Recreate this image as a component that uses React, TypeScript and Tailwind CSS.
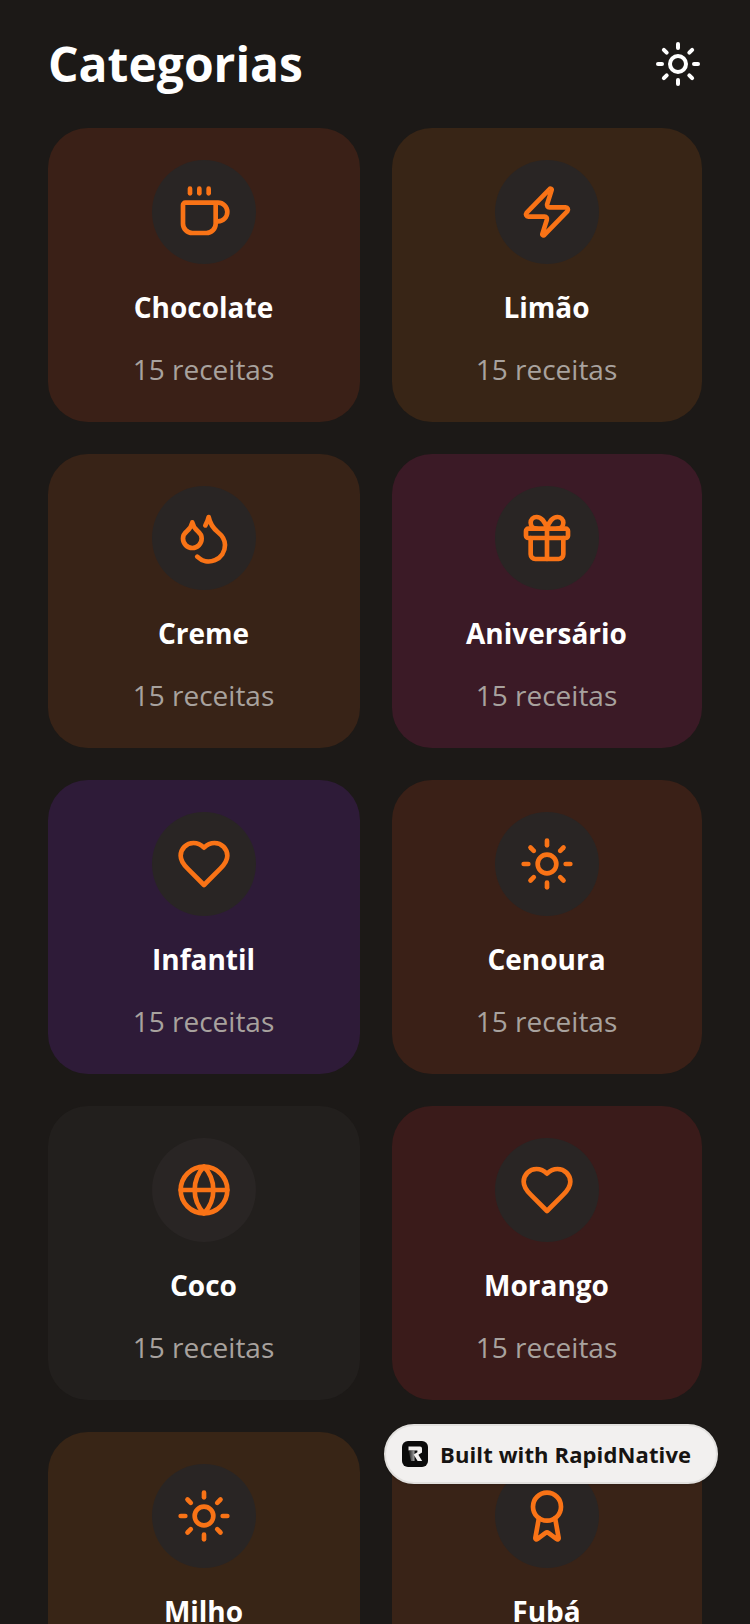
import React from "react";
import { Award, Coffee, Droplets, Globe, Sun, Zap } from "lucide-react";

type IconProps = { className?: string };

// older lucide shapes: pointed heart, gift with the taller bow
const Heart = ({ className }: IconProps) => (
  <svg className={className} viewBox="0 0 24 24" fill="none" stroke="currentColor" strokeWidth="2" strokeLinecap="round" strokeLinejoin="round">
    <path d="M19 14c1.49-1.46 3-3.21 3-5.5A5.5 5.5 0 0 0 16.5 3c-1.76 0-3 .5-4.5 2-1.5-1.5-2.74-2-4.5-2A5.5 5.5 0 0 0 2 8.5c0 2.3 1.5 4.05 3 5.5l7 7Z" />
  </svg>
);

const Gift = ({ className }: IconProps) => (
  <svg className={className} viewBox="0 0 24 24" fill="none" stroke="currentColor" strokeWidth="2" strokeLinecap="round" strokeLinejoin="round">
    <rect x="3" y="8" width="18" height="4" rx="1" />
    <path d="M12 8v13" />
    <path d="M19 12v7a2 2 0 0 1-2 2H7a2 2 0 0 1-2-2v-7" />
    <path d="M7.5 8a2.5 2.5 0 0 1 0-5A4.8 8 0 0 1 12 8a4.8 8 0 0 1 4.5-5 2.5 2.5 0 0 1 0 5" />
  </svg>
);

const categories = [
  { name: "Chocolate", icon: Coffee, bg: "bg-[#3a2017]" },
  { name: "Limão", icon: Zap, bg: "bg-[#382516]" },
  { name: "Creme", icon: Droplets, bg: "bg-[#382317]" },
  { name: "Aniversário", icon: Gift, bg: "bg-[#3b1a26]" },
  { name: "Infantil", icon: Heart, bg: "bg-[#2e1b38]" },
  { name: "Cenoura", icon: Sun, bg: "bg-[#3a2017]" },
  { name: "Coco", icon: Globe, bg: "bg-[#221f1d]" },
  { name: "Morango", icon: Heart, bg: "bg-[#3a1b1a]" },
  { name: "Milho", icon: Sun, bg: "bg-[#382516]" },
  { name: "Fubá", icon: Award, bg: "bg-[#392317]" },
];

const App = () => {
  return (
    <div className="relative h-[1624px] w-[750px] overflow-hidden bg-[#1c1917] font-['Open_Sans',sans-serif]">
      {/* Header */}
      <div className="flex items-center justify-between px-12 py-8">
        <h1 className="text-[48px] leading-[64px] font-bold text-white">Categorias</h1>
        <Sun className="h-12 w-12 text-white" />
      </div>

      {/* Category grid */}
      <div className="grid grid-cols-[312px_310px] gap-8 pl-12">
        {categories.map((category) => {
          const Icon = category.icon;
          return (
            <div
              key={category.name}
              className={`flex h-[294px] flex-col items-center rounded-[40px] pt-8 pl-8 pr-[33px] ${category.bg}`}
            >
              <div className="flex h-[104px] w-[104px] shrink-0 items-center justify-center rounded-full bg-[#292524]">
                <Icon className="h-14 w-14 text-[#f97316]" />
              </div>
              <p className="mt-[23px] text-[28px] leading-[40px] font-bold text-white">{category.name}</p>
              <p className="mt-[22px] text-[28px] leading-[40px] text-[#a8a29e]">15 receitas</p>
            </div>
          );
        })}
      </div>

      {/* Built with badge */}
      <div className="absolute left-[384px] top-[1424px] flex h-[60px] w-[334px] items-center gap-[12px] rounded-full border-2 border-[#e2e0de] bg-[#f2f0ef] pl-[16px] shadow-sm">
        <svg className="h-[26px] w-[26px] shrink-0" viewBox="0 0 26 26">
          <defs>
            <linearGradient id="stem" x1="0" x2="1" y1="0" y2="0">
              <stop offset="0" stopColor="#1a1a1a" />
              <stop offset="1" stopColor="#d8d8d8" />
            </linearGradient>
          </defs>
          <rect width="26" height="26" rx="6" fill="#0b0b0b" />
          <path d="M6.5 5.5h11.5a2 2 0 0 1 2 2v4l-3.6 2.3 3.8 6.2h-4.6l-4-6.4 3.8-2.4V9.5H6.5z" fill="#f2f0ef" />
          <path d="M6.5 9.5h6v10.5H9z" fill="url(#stem)" opacity="0.75" />
        </svg>
        <span className="text-[22px] leading-[30px] font-bold tracking-[0.12px] text-[#171412]">Built with RapidNative</span>
      </div>
    </div>
  );
};

export default App;
